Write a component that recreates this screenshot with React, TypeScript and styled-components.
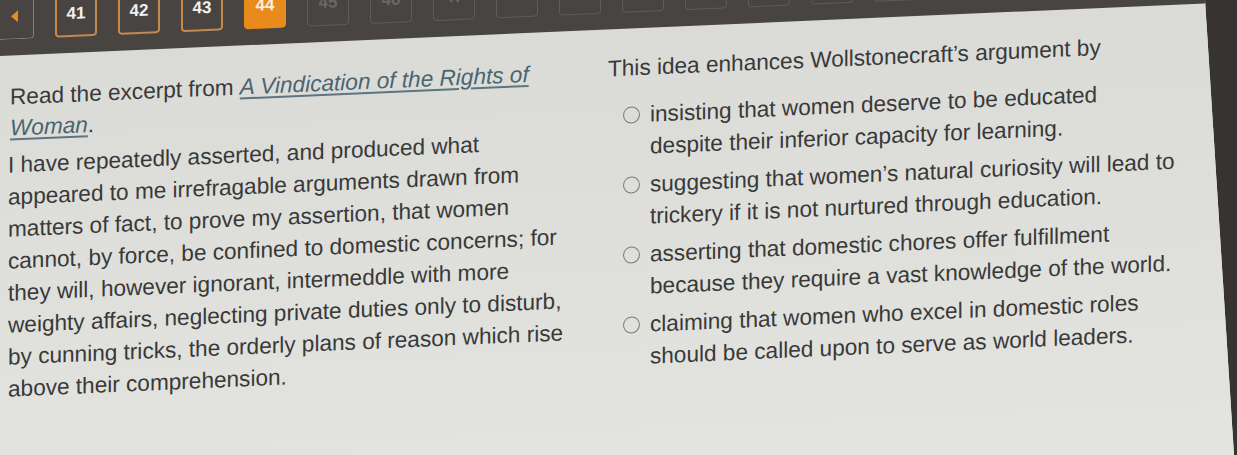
import styled, { createGlobalStyle } from 'styled-components';

const GlobalStyle = createGlobalStyle`
  html, body {
    margin: 0;
    padding: 0;
    background: #363330;
    overflow: hidden;
  }
  body {
    font-family: 'Liberation Sans', Arial, sans-serif;
  }
`;

const Stage = styled.div`
  width: 1237px;
  height: 455px;
  overflow: hidden;
  background: #363330;
`;

// the photo is taken at an angle: the screen ends in a slanted bezel on the right
const Screen = styled.div`
  height: 100%;
  overflow: hidden;
  background: #dfe0dc;
  clip-path: polygon(0 0, 1205px 0, 1234px 100%, 0 100%);
`;

const Page = styled.div`
  min-height: 540px;
  transform: skewY(-2.5deg);
  transform-origin: 0 0;
  background: linear-gradient(180deg, #d9dad6 0%, #dedfdb 45%, #e4e5e1 100%);
`;

const NavBar = styled.div`
  height: 56px;
  box-sizing: border-box;
  padding-bottom: 16px;
  background: #484441;
  display: flex;
  align-items: flex-end;
  gap: 21px;
  overflow: hidden;
`;

const ArrowButton = styled.div`
  width: 34px;
  height: 46px;
  box-sizing: border-box;
  border: 1.5px solid #85827e;
  border-left: none;
  border-radius: 0 4px 4px 0;
  display: flex;
  align-items: center;
  justify-content: center;
  flex-shrink: 0;
`;

const Arrow = styled.span`
  width: 0;
  height: 0;
  border-top: 6px solid transparent;
  border-bottom: 6px solid transparent;
  border-right: 7px solid #e98b1f;
  margin-right: 4px;
`;

type NumState = 'done' | 'current' | 'todo';

const NumButton = styled.div<{ $state: NumState }>`
  width: 42px;
  height: 46px;
  flex-shrink: 0;
  box-sizing: border-box;
  border-radius: 4px;
  display: flex;
  align-items: center;
  justify-content: center;
  font-size: 17px;
  font-weight: bold;
  border: ${(p) =>
    p.$state === 'done'
      ? '2px solid #c8874d'
      : p.$state === 'current'
      ? '2px solid #e98a1d'
      : '1.5px solid #5f5c58'};
  background: ${(p) => (p.$state === 'current' ? '#e98a1d' : 'transparent')};
  color: ${(p) =>
    p.$state === 'done' ? '#f1f1ef' : p.$state === 'current' ? '#fbefe0' : '#6a6763'};
`;

const Content = styled.div`
  display: grid;
  grid-template-columns: 598px 1fr;
  padding: 24px 0 0 10px;
  color: #393939;
  font-size: 22.6px;
`;

const Passage = styled.div`
  padding-top: 2px;
  line-height: 31px;
  white-space: nowrap;
`;

const Prompt = styled.p`
  margin: 0 0 6px;
`;

const Title = styled.span`
  font-style: italic;
  color: #4a6470;
  text-decoration: underline;
  text-decoration-color: #5c7580;
  text-underline-offset: 3px;
`;

const Excerpt = styled.p`
  margin: 0 0 0 -2px;
  line-height: 32px;
`;

const Question = styled.div`
  line-height: 32px;
  white-space: nowrap;
`;

const Stem = styled.p`
  margin: 0 0 15px;
`;

const Options = styled.div`
  display: flex;
  flex-direction: column;
  gap: 6px;
`;

const Option = styled.label`
  display: flex;
  align-items: flex-start;
`;

const Radio = styled.span`
  width: 17px;
  height: 17px;
  box-sizing: border-box;
  border-radius: 50%;
  border: 1.6px solid #7a7a78;
  margin: 7px 10px 0 15px;
  flex-shrink: 0;
`;

const OptionText = styled.span``;

const numbers: { n: number; state: NumState }[] = Array.from({ length: 16 }, (_, i) => {
  const n = 41 + i;
  return { n, state: n < 44 ? 'done' : n === 44 ? 'current' : 'todo' };
});

const excerpt = [
  'I have repeatedly asserted, and produced what',
  'appeared to me irrefragable arguments drawn from',
  'matters of fact, to prove my assertion, that women',
  'cannot, by force, be confined to domestic concerns; for',
  'they will, however ignorant, intermeddle with more',
  'weighty affairs, neglecting private duties only to disturb,',
  'by cunning tricks, the orderly plans of reason which rise',
  'above their comprehension.',
];

const options = [
  ['insisting that women deserve to be educated', 'despite their inferior capacity for learning.'],
  ['suggesting that women\u2019s natural curiosity will lead to', 'trickery if it is not nurtured through education.'],
  ['asserting that domestic chores offer fulfillment', 'because they require a vast knowledge of the world.'],
  ['claiming that women who excel in domestic roles', 'should be called upon to serve as world leaders.'],
];

export default function App() {
  return (
    <>
      <GlobalStyle />
      <Stage>
        <Screen>
          <Page>
            <NavBar>
              <ArrowButton>
                <Arrow />
              </ArrowButton>
              {numbers.map((b) => (
                <NumButton key={b.n} $state={b.state}>
                  {b.n}
                </NumButton>
              ))}
            </NavBar>
            <Content>
              <Passage>
                <Prompt>
                  Read the excerpt from <Title>A Vindication of the Rights of</Title>
                  <br />
                  <Title>Woman</Title>.
                </Prompt>
                <Excerpt>
                  {excerpt.map((line) => (
                    <span key={line}>
                      {line}
                      <br />
                    </span>
                  ))}
                </Excerpt>
              </Passage>
              <Question>
                <Stem>This idea enhances Wollstonecraft&rsquo;s argument by</Stem>
                <Options>
                  {options.map(([a, b]) => (
                    <Option key={a}>
                      <Radio />
                      <OptionText>
                        {a}
                        <br />
                        {b}
                      </OptionText>
                    </Option>
                  ))}
                </Options>
              </Question>
            </Content>
          </Page>
        </Screen>
      </Stage>
    </>
  );
}
